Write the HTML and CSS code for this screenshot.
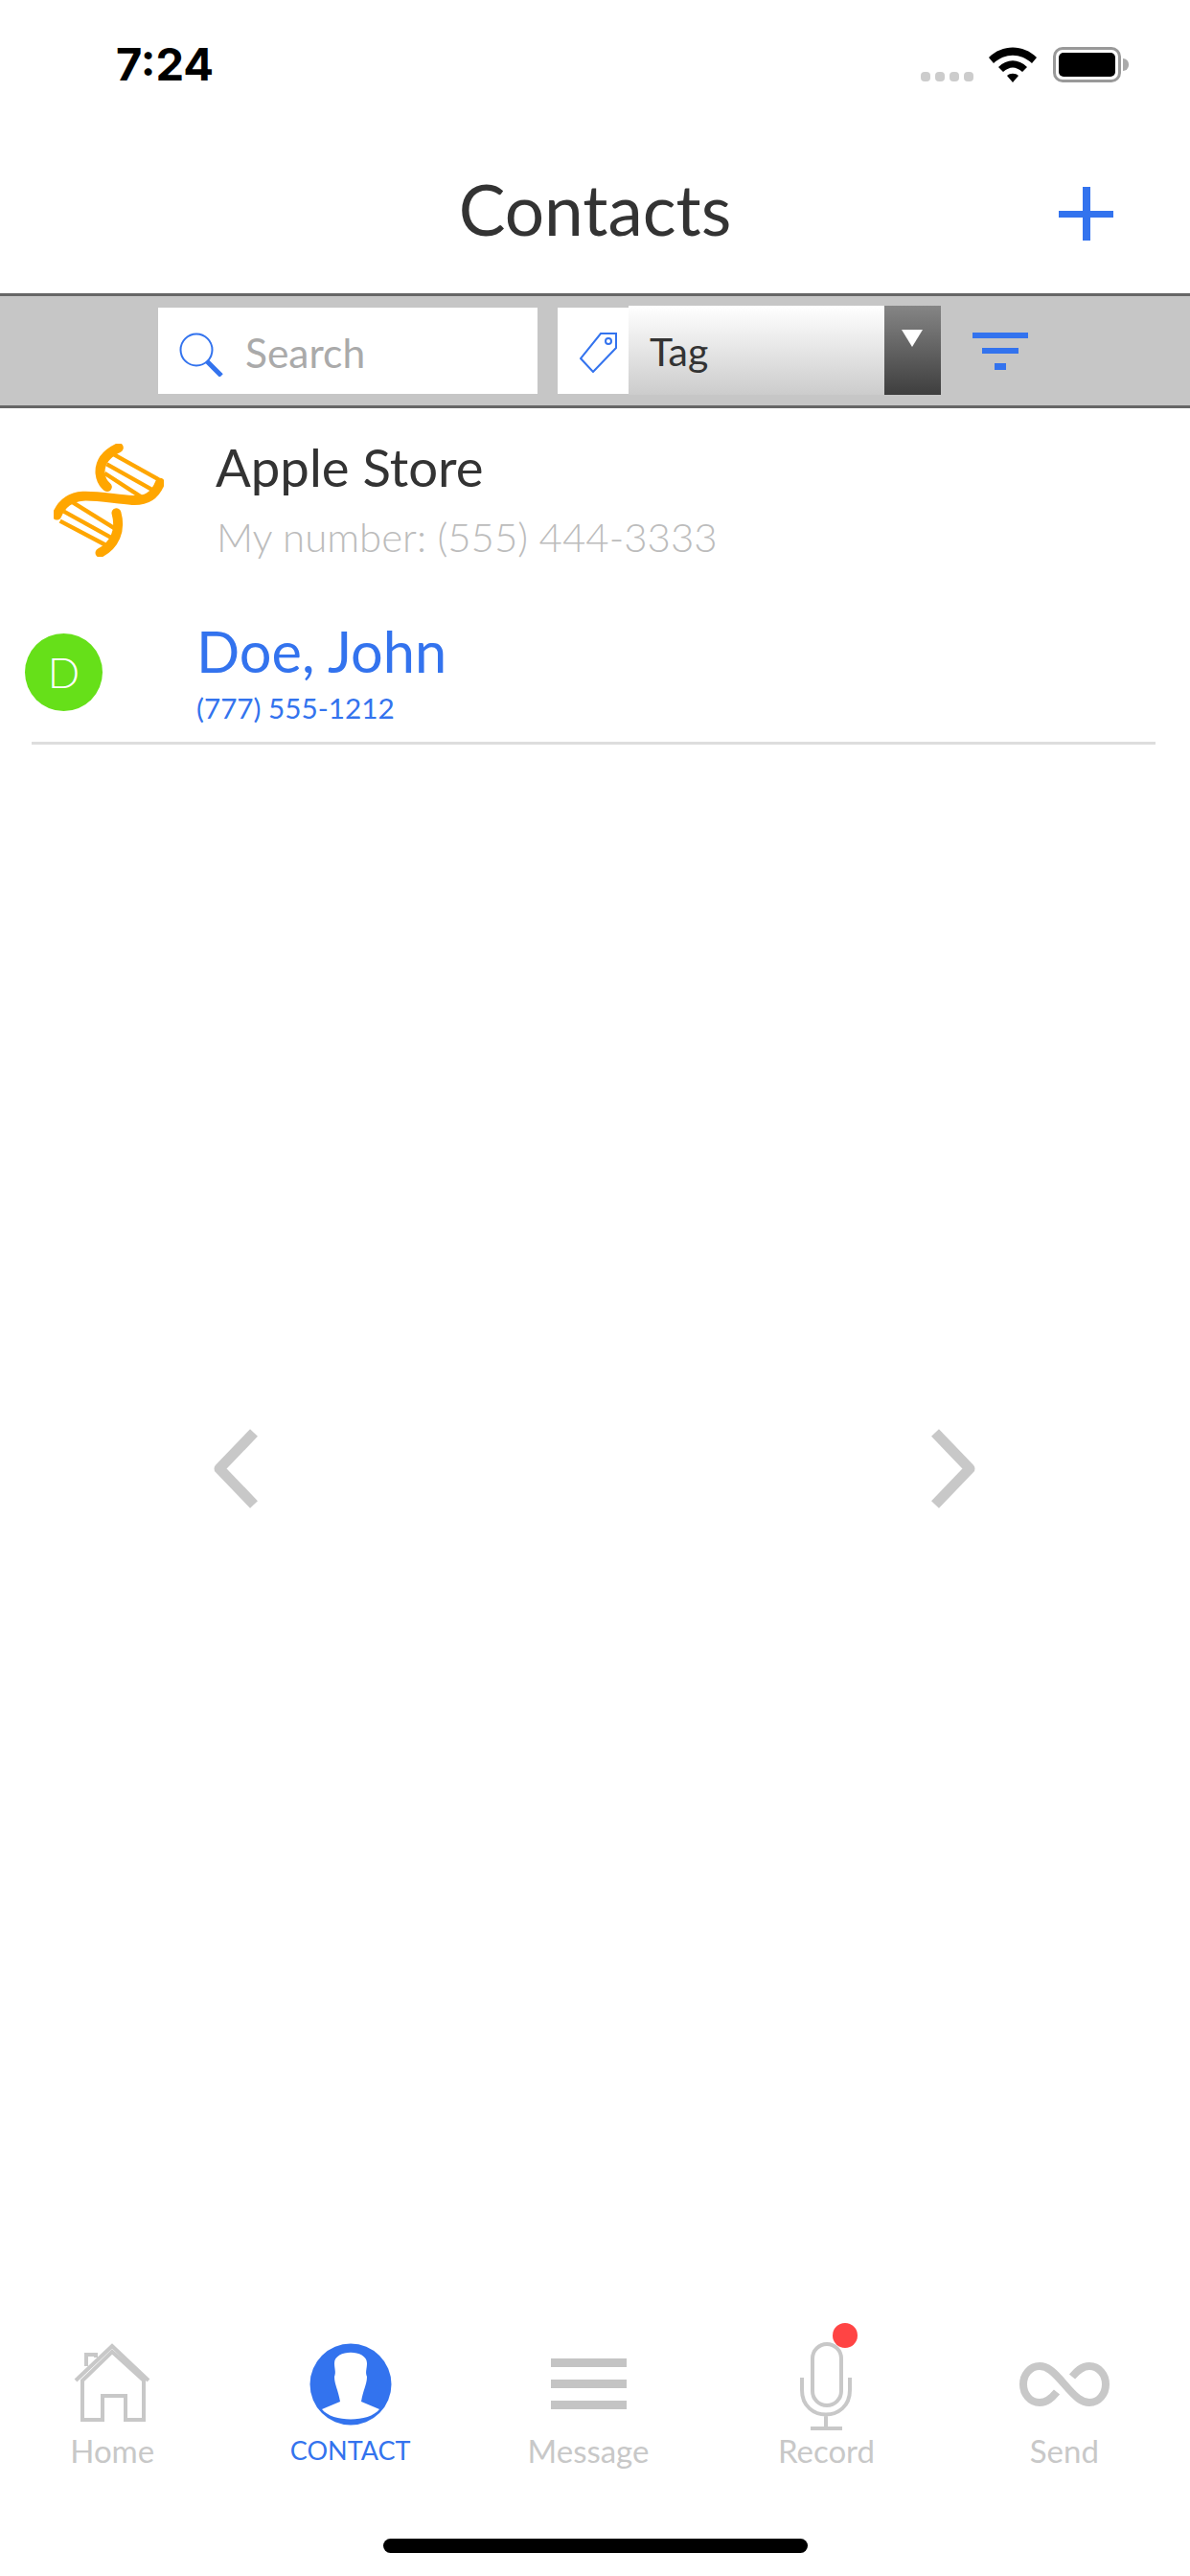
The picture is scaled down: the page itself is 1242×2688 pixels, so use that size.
FILE: index.html
```html
<!DOCTYPE html>
<html>
<head>
	<meta charset="utf-8">
	<title>Contacts</title>
	<link rel="stylesheet" href="styles.css">
</head>
<body>
	<div id="screen">
		<div id="status">
			<span class="time">7:24</span>
			<div class="status-icons">
				<div class="signal"><i></i><i></i><i></i><i></i></div>
				<svg class="wifi" width="50" height="37" viewBox="0 0 50 37">
					<path d="M0 11C14-3 36-3 50 11L45 17C33 6 17 6 5 17Z"/>
					<path d="M10 21C19 12 31 12 40 21L35 26C28 20 22 20 15 26Z"/>
					<path d="M19 30C22 27 28 27 31 30L25 37Z"/>
				</svg>
				<div class="battery"><div class="battery-fill"></div></div>
				<div class="battery-nub"></div>
			</div>
		</div>

		<div id="header">
			<h1>Contacts</h1>
			<svg class="add" width="57" height="56" viewBox="0 0 57 56">
				<rect x="25" y="0" width="8" height="56"/>
				<rect x="0" y="25" width="57" height="7"/>
			</svg>
		</div>

		<div id="toolbar">
			<div class="search">
				<svg width="46" height="46" viewBox="0 0 46 46">
					<circle cx="18" cy="18" r="16.5" class="line"/>
					<path d="M29 30L44 45" class="line thick"/>
				</svg>
				<span>Search</span>
			</div>
			<div class="tag-icon">
				<svg width="40" height="42" viewBox="0 0 40 42">
					<path d="M22 1H38V16L14 41L1 27Z" class="line"/>
					<circle cx="30" cy="9" r="3" class="line"/>
				</svg>
			</div>
			<div class="tag-select">
				<span>Tag</span>
				<div class="tag-arrow"><b></b></div>
			</div>
			<div class="filter"><i></i><i></i><i></i></div>
		</div>

		<div id="list">
			<div class="store">
				<svg class="dna" width="115" height="118" viewBox="78 68 346 354">
					<g class="dna-rung">
						<path d="M265 100L408 180"/>
						<path d="M245 132L388 212"/>
						<path d="M238 160L358 238"/>
						<path d="M135 250L272 335"/>
						<path d="M110 280L258 362"/>
						<path d="M98 310L240 385"/>
					</g>
					<g class="dna-strand">
						<path d="M282 80C240 100 222 125 224 160C226 180 236 195 246 203"/>
						<path d="M412 190C395 235 365 247 325 245C270 241 215 230 170 232C125 235 100 262 88 292"/>
						<path d="M275 285C290 340 270 385 224 410"/>
					</g>
				</svg>
				<div class="store-text">
					<div class="store-name">Apple Store</div>
					<div class="store-number">My number: (555) 444-3333</div>
				</div>
			</div>
			<div class="contact">
				<div class="avatar">D</div>
				<div class="contact-text">
					<div class="contact-name">Doe, John</div>
					<div class="contact-phone">(777) 555-1212</div>
				</div>
			</div>
		</div>

		<div id="pager">
			<svg width="50" height="85" viewBox="0 0 50 85">
				<path d="M43 5L7 42.5L43 80"/>
			</svg>
			<svg width="50" height="85" viewBox="0 0 50 85">
				<path d="M7 5L43 42.5L7 80"/>
			</svg>
		</div>

		<div id="tabs">
			<div class="tab">
				<svg width="80" height="96" viewBox="0 0 80 96">
					<path d="M2 44L40 8L78 44M13 29V17H23V20M9 44V85H30V60H54V85H73V44L40 14Z"/>
				</svg>
				<span>Home</span>
			</div>
			<div class="tab current">
				<svg width="86" height="96" viewBox="0 0 86 96">
					<circle cx="43" cy="48" r="42.5" class="avatar-bg"/>
					<path class="avatar-person" d="M26 26C26 11 60 11 60 26C60 32 58 35 60 40C60 48 56 54 54 66L73 74C62 88 24 88 13 74L32 66C30 54 26 48 26 40C28 35 26 32 26 26Z"/>
				</svg>
				<span>CONTACT</span>
			</div>
			<div class="tab">
				<div class="menu-lines"><i></i><i></i><i></i></div>
				<span>Message</span>
			</div>
			<div class="tab">
				<div class="mic">
					<svg width="54" height="96" viewBox="0 0 54 96">
						<rect x="13" y="6" width="30" height="64" rx="15"/>
						<path d="M2 41V54C2 88 52 88 52 54V41M27 78V94M11 94H44"/>
					</svg>
					<i class="badge"></i>
				</div>
				<span>Record</span>
			</div>
			<div class="tab">
				<svg width="96" height="96" viewBox="0 0 96 96">
					<path class="infinity" d="M48 48C36 34 30 29 22 29C12 29 5 38 5 48C5 58 12 67 22 67C30 67 35 62 40 56M48 48C60 62 66 67 74 67C84 67 91 58 91 48C91 38 84 29 74 29C66 29 61 34 56 40"/>
				</svg>
				<span>Send</span>
			</div>
		</div>

		<div id="home-bar"><div></div></div>
	</div>
</body>
</html>
```

FILE: styles.css
```css
*{
	margin: 0;
	padding: 0;
	box-sizing: border-box;
}
body{
	background: #fff;
	font-family: Lato, "Liberation Sans", sans-serif;
}
i{
	display: block;
}
#screen{
	width: 1242px;
	height: 2688px;
	display: flex;
	flex-direction: column;
	overflow: hidden;
}

/* status bar */
#status{
	height: 132px;
	padding: 44px 64px 0 121px;
	display: flex;
	justify-content: space-between;
	align-items: flex-start;
}
.time{
	font-family: Inter, sans-serif;
	font-size: 47px;
	font-weight: 700;
	line-height: 46px;
	color: #000;
}
.status-icons{
	display: flex;
	align-items: flex-start;
	padding-top: 5px;
}
.signal{
	display: flex;
	gap: 5px;
	margin: 26px 16px 0 0;
}
.signal i{
	width: 10px;
	height: 10px;
	border-radius: 4px;
	background: #ccc;
}
.wifi{
	margin-right: 17px;
}
.battery{
	width: 71px;
	height: 37px;
	border: 3px solid #999;
	border-radius: 10px;
	padding: 3px;
}
.battery-fill{
	height: 100%;
	background: #000;
	border-radius: 5px;
}
.battery-nub{
	width: 6px;
	height: 13px;
	margin: 12px 0 0 2px;
	background: #aaa;
	border-radius: 0 6px 6px 0;
}

/* title */
#header{
	height: 174px;
	padding: 63px 80px 0 0;
	display: flex;
	justify-content: flex-end;
	position: relative;
}
#header h1{
	position: absolute;
	left: 0;
	right: 0;
	top: 44px;
	text-align: center;
	font-size: 73px;
	font-weight: 400;
	line-height: 84px;
	color: #333;
}
.add{
	fill: #3373ee;
}

/* search row */
#toolbar{
	height: 120px;
	background: #c6c6c6;
	border-top: 3px solid #666;
	border-bottom: 3px solid #666;
	padding-left: 165px;
	display: flex;
	align-items: flex-start;
}
.line{
	fill: none;
	stroke: #3373ee;
	stroke-width: 2;
}
.thick{
	stroke-width: 5;
}
.search{
	width: 396px;
	height: 90px;
	margin-top: 12px;
	background: #fff;
	padding: 26px 0 0 22px;
	display: flex;
	align-items: flex-start;
	gap: 23px;
}
.search span{
	font-size: 42.5px;
	line-height: 42px;
	color: #aaa;
}
.tag-icon{
	width: 74px;
	height: 90px;
	margin: 12px 0 0 21px;
	background: #fff;
	padding: 26px 0 0 23px;
}
.tag-select{
	width: 326px;
	height: 93px;
	margin-top: 10px;
	background: linear-gradient(#fff, #ccc);
	display: flex;
	justify-content: space-between;
}
.tag-select span{
	font-size: 41px;
	line-height: 40px;
	color: #333;
	padding: 28px 0 0 22px;
}
.tag-arrow{
	width: 59px;
	height: 93px;
	background: linear-gradient(#858585, #3e3e3e);
	padding: 25px 0 0 18px;
}
.tag-arrow b{
	display: block;
	width: 0;
	height: 0;
	border-left: 11px solid transparent;
	border-right: 11px solid transparent;
	border-top: 18px solid #fff;
}
.filter{
	margin: 38px 0 0 33px;
	width: 58px;
	display: flex;
	flex-direction: column;
	align-items: center;
	gap: 10px;
}
.filter i{
	height: 6px;
	background: #3373ee;
	width: 58px;
}
.filter i:nth-child(2){
	width: 38px;
}
.filter i:nth-child(3){
	width: 12px;
	height: 7px;
}

/* list */
#list{
	height: 351px;
}
.store{
	height: 174px;
	padding: 37px 0 0 56px;
	display: flex;
	align-items: flex-start;
	gap: 54px;
}
.dna path{
	fill: none;
}
.dna-strand path{
	stroke: #ffa600;
	stroke-width: 30;
	stroke-linecap: round;
}
.dna-rung path{
	stroke: #ffa600;
	stroke-width: 13;
}
.store-text{
	margin-top: -8px;
}
.store-name{
	font-size: 54.5px;
	line-height: 64px;
	color: #333;
}
.store-number{
	font-size: 42px;
	font-weight: 300;
	line-height: 50px;
	margin: 16px 0 0 1px;
	color: #bcbcbc;
}
.contact{
	height: 177px;
	margin-left: 33px;
	width: 1173px;
	border-bottom: 3px solid #ddd;
	display: flex;
	align-items: flex-start;
}
.avatar{
	width: 81px;
	height: 81px;
	margin: 61px 0 0 -7px;
	border-radius: 50%;
	background: #66e019;
	color: #fff;
	font-size: 44px;
	font-weight: 300;
	line-height: 81px;
	text-align: center;
}
.contact-text{
	margin: 43px 0 0 98px;
}
.contact-name{
	font-size: 59.5px;
	line-height: 72px;
	color: #3373ee;
}
.contact-phone{
	font-size: 29.7px;
	line-height: 36px;
	margin-top: 6px;
	color: #3373ee;
}

/* paging arrows */
#pager{
	flex: 1;
	padding: 713px 223px 0 222px;
	display: flex;
	justify-content: space-between;
	align-items: flex-start;
}
#pager path{
	fill: none;
	stroke: #c8c8c8;
	stroke-width: 11;
	stroke-linejoin: round;
}

/* tab bar */
#tabs{
	width: 1242px;
	height: 209px;
	margin-left: -7px;
	display: flex;
}
.tab{
	flex: 1;
	display: flex;
	flex-direction: column;
	align-items: center;
	color: #c8c8c8;
	font-size: 33px;
	line-height: 40px;
}
.tab svg path, .tab svg rect{
	fill: none;
	stroke: #c8c8c8;
	stroke-width: 4;
}
.tab span{
	margin-top: 1px;
}
.tab.current{
	color: #3373ee;
	font-size: 27px;
}
.tab svg .avatar-bg{
	fill: #3373ee;
}
.tab svg .avatar-person{
	fill: #fff;
	stroke: none;
}
.tab svg .infinity{
	stroke-width: 8;
}
.menu-lines{
	width: 79px;
	height: 96px;
	padding-top: 21px;
	display: flex;
	flex-direction: column;
	gap: 13px;
}
.menu-lines i{
	height: 9px;
	background: #c4c4c4;
}
.mic{
	position: relative;
	height: 96px;
}
.badge{
	position: absolute;
	left: 34px;
	top: -16px;
	width: 26px;
	height: 26px;
	border-radius: 50%;
	background: #f44;
}

#home-bar{
	height: 39px;
	display: flex;
	justify-content: center;
}
#home-bar div{
	width: 443px;
	height: 15px;
	border-radius: 8px;
	background: #000;
}
```
